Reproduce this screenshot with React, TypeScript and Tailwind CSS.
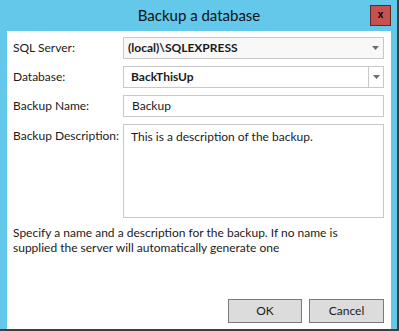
const font = { fontFamily: 'Lato, "Open Sans", sans-serif' };

function Arrow() {
    return (
        <svg width="7" height="4" viewBox="0 0 7 4" className="shrink-0">
            <polygon points="0,0 7,0 3.5,4" fill="#6d6d6d" />
        </svg>
    );
}

function Row({ label, children }: { label: string; children: React.ReactNode }) {
    return (
        <div className="flex items-center h-[22px]">
            <span className="w-[110px] shrink-0 whitespace-nowrap">{label}</span>
            {children}
        </div>
    );
}

export default function App() {
    return (
        <div
            className="w-[399px] h-[331px] flex flex-col bg-[#63c8ea] border-r-2 border-b-2 border-[#3f3f3f] pl-[7px] pr-[6px] text-[12px] text-[#1b1b1b]"
            style={font}
        >
            {/* Title bar */}
            <div className="h-[31px] grid grid-cols-[1fr_auto_1fr] items-center">
                <div />
                <span className="text-[15px] text-[#111] leading-none pb-[1px]">Backup a database</span>
                <div className="justify-self-end self-start mt-[5px] w-[21px] h-[21px] bg-[#c75050] border border-[#5e2a2a] flex items-center justify-center">
                    <span className="text-[10px] font-bold leading-none text-black pb-[2px]" style={{ fontFamily: '"Liberation Sans", sans-serif' }}>
                        x
                    </span>
                </div>
            </div>

            {/* Client area */}
            <div className="flex-1 bg-white flex flex-col pt-[6px] pl-[6px] pr-[7px] pb-[6px]">
                <div className="flex flex-col gap-[7px]">
                    <Row label="SQL Server:">
                        <div className="flex-1 h-full flex items-center border border-[#c8c8c8] bg-[#f8f8f8] pl-[4px] pr-[4px]">
                            <span className="flex-1 font-bold">(local)\SQLEXPRESS</span>
                            <Arrow />
                        </div>
                    </Row>
                    <Row label="Database:">
                        <div className="flex-1 h-full flex items-center border border-[#c8c8c8] bg-white">
                            <span className="flex-1 font-bold pl-[7px]">BackThisUp</span>
                            <div className="w-[15px] h-full border-l border-[#c8c8c8] flex items-center justify-center">
                                <Arrow />
                            </div>
                        </div>
                    </Row>
                    <Row label="Backup Name:">
                        <div className="flex-1 h-full flex items-center border border-[#c8c8c8] bg-white pl-[8px]">
                            Backup
                        </div>
                    </Row>
                    <div className="flex h-[94px]">
                        <span className="w-[110px] shrink-0 pt-[3px] whitespace-nowrap">Backup Description:</span>
                        <div className="flex-1 border border-[#c8c8c8] bg-white pl-[7px] pt-[3px]">
                            This is a description of the backup.
                        </div>
                    </div>
                </div>

                <p className="mt-[7px] leading-[15px] whitespace-nowrap">
                    Specify a name and a description for the backup. If no name is
                    <br />
                    supplied the server will automatically generate one
                </p>

                <div className="mt-auto flex justify-end gap-[7px]">
                    <button className="w-[74px] h-[24px] bg-[#dcdcdc] border border-[#7a7a7a]">
                        OK
                    </button>
                    <button className="w-[75px] h-[24px] bg-[#dcdcdc] border border-[#7a7a7a]">
                        Cancel
                    </button>
                </div>
            </div>
        </div>
    );
}
